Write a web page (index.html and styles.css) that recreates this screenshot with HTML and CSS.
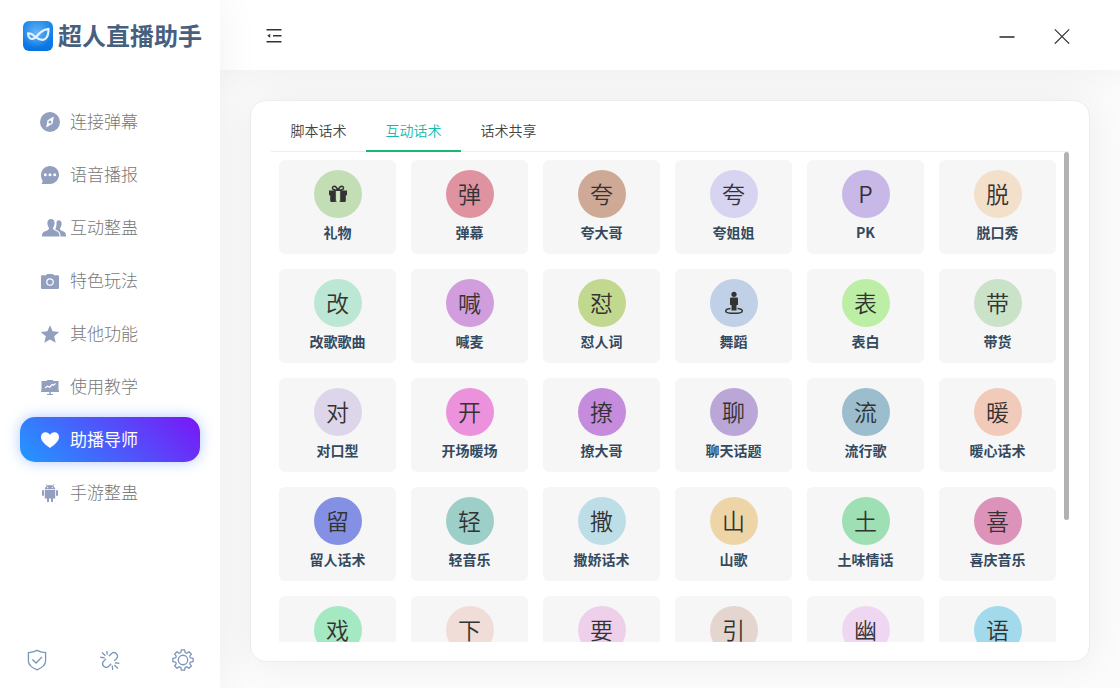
FILE: index.html
```html
<!DOCTYPE html>
<html lang="zh-CN">
<head>
<meta charset="utf-8">
<title>超人直播助手</title>
<link rel="stylesheet" href="styles.css">
</head>
<body>
<div class="app">
  <aside class="sidebar">
    <div class="brand">
      <svg class="brand-logo" viewBox="0 0 30 30" aria-hidden="true">
        <defs>
          <linearGradient id="logo-bg" x1="0" y1="0" x2="0" y2="1"><stop offset="0" stop-color="#1f8cec"/><stop offset="1" stop-color="#0673e2"/></linearGradient>
          <radialGradient id="logo-glow" cx=".45" cy=".4" r=".5"><stop offset="0" stop-color="#6bb5f6"/><stop offset="1" stop-color="#6bb5f6" stop-opacity="0"/></radialGradient>
        </defs>
        <rect width="30" height="30" rx="6" fill="url(#logo-bg)"/>
        <rect width="30" height="30" rx="6" fill="url(#logo-glow)"/>
        <path d="M5 12.300c.2 3.200 1.500 5.700 4 5.700 3.500 0 5.500-4 8.500-6.600 2.300-2 5-3.200 8-3.600.1 4.500-.8 8.200-3.300 10-3.700 2.500-7.200.2-10.200-2.300C9.800 13.600 7.500 12 5 12.300z" fill="none" stroke="#e4f1fe" stroke-width="2.200" stroke-linejoin="round"/>
      </svg>
      <span class="brand-name">超人直播助手</span>
    </div>
    <nav class="menu">
      <a class="menu-item" href="#">
        <svg class="menu-icon" viewBox="0 0 20 20" aria-hidden="true"><path fill-rule="evenodd" d="M10 0a10 10 0 1 1 0 20 10 10 0 0 1 0-20zm3.800 4.500L7.500 8.200 6.200 15.500l6.300-3.700zM10 8.500a1.500 1.500 0 1 1 0 3 1.500 1.500 0 0 1 0-3z"/></svg>
        <span>连接弹幕</span>
      </a>
      <a class="menu-item" href="#">
        <svg class="menu-icon" viewBox="0 0 20 20" aria-hidden="true"><path fill-rule="evenodd" d="M10 1c5 0 9 3.900 9 8.700s-4 9.300-9 9.300H1.500l1.300-2.800C1.600 14.500 1 12.200 1 10 1 5 5 1 10 1zM5.300 8.300a1.500 1.500 0 1 0 0 3 1.500 1.500 0 0 0 0-3zm4.700 0a1.500 1.500 0 1 0 0 3 1.500 1.500 0 0 0 0-3zm4.700 0a1.500 1.500 0 1 0 0 3 1.500 1.500 0 0 0 0-3z"/></svg>
        <span>语音播报</span>
      </a>
      <a class="menu-item" href="#">
        <svg class="menu-icon wide" viewBox="0 0 26 20" aria-hidden="true"><path d="M11 1c2.500 0 3.800 1.800 3.600 4.500-.1 2-1 3.500-1.600 4.300 0 1.700.5 2.100 2.500 2.900 3 1.100 4 2 4 5.800H2c0-3.800 1-4.700 4.500-5.800 2-.7 2.500-1.200 2.500-2.900C8.300 9 7.500 7.500 7.400 5.500 7.200 2.800 8.500 1 11 1z"/><path d="M18.500 2.300c2.200 0 3.300 1.600 3.100 4-.1 1.700-.9 3.200-1.600 4 0 1.600.6 2 2.400 2.700 2.800 1 3.600 2 3.600 5.500h-5.500c0-3.500-1-5.300-4-6.400-1-.4-1.200-.8-1-1.700.8-1.300 1.100-3.200 1-5.200-.1-1 .5-2.900 2-2.900z"/></svg>
        <span>互动整蛊</span>
      </a>
      <a class="menu-item" href="#">
        <svg class="menu-icon" viewBox="0 0 20 20" aria-hidden="true"><path fill-rule="evenodd" d="M2.200 4.200H6L7 3h6l1 1.200h3.800A1.200 1.200 0 0 1 19 5.400v11.400a1.200 1.200 0 0 1-1.200 1.200H2.200A1.200 1.200 0 0 1 1 16.800V5.400a1.200 1.200 0 0 1 1.200-1.200zM10 7.200a3.800 3.800 0 1 0 0 7.600 3.800 3.800 0 0 0 0-7.600zm0 1.200a2.600 2.600 0 1 1 0 5.200 2.600 2.600 0 0 1 0-5.200z"/></svg>
        <span>特色玩法</span>
      </a>
      <a class="menu-item" href="#">
        <svg class="menu-icon" viewBox="0 0 20 20" aria-hidden="true"><path d="M10 1.200l2.600 6.100 6.600.6-5 4.400 1.500 6.500-5.700-3.400-5.700 3.400 1.500-6.500-5-4.400 6.600-.6z"/></svg>
        <span>其他功能</span>
      </a>
      <a class="menu-item" href="#">
        <svg class="menu-icon" viewBox="0 0 20 20" aria-hidden="true"><path d="M1.500 4H7V3h6v1h5.500v11h-17z"/><path d="M9.200 15h1.600v2H13v1H7v-1h2.200z"/><path d="M1 13.500h18V15H1z"/><path d="M5 11l2.600-1.800 2.200 1 2.200-2.700 1.300.8L15.500 6.500" fill="none" stroke="#fff" stroke-width="1.200"/></svg>
        <span>使用教学</span>
      </a>
      <a class="menu-item active" href="#" aria-current="page">
        <svg class="menu-icon" viewBox="0 0 20 20" aria-hidden="true"><path d="M10 18C6 15 1 11.500 1 7c0-2.700 2-4.700 4.600-4.700 2 0 3.500 1 4.400 2.700.9-1.700 2.400-2.700 4.400-2.700C17 2.300 19 4.300 19 7c0 4.500-5 8-9 11z"/></svg>
        <span>助播导师</span>
      </a>
      <a class="menu-item" href="#">
        <svg class="menu-icon" viewBox="0 0 20 20" aria-hidden="true"><path fill-rule="evenodd" d="M6 1l1.500 1.600a6 6 0 0 1 5 0L14 1l.4.300L13.200 3c1.200.8 2 1.900 2 3.300H4.800c0-1.400.8-2.500 2-3.300L5.600 1.300zM7.700 4a.6.6 0 1 0 0 1.200.6.600 0 0 0 0-1.200zm4.600 0a.6.600 0 1 0 0 1.200.6.600 0 0 0 0-1.200z"/><path d="M4.800 7h10.400v8.500H13v2.700a1 1 0 0 1-2 0v-2.700H9v2.700a1 1 0 0 1-2 0v-2.700H4.800z"/><rect x="2" y="7" width="2" height="6" rx="1"/><rect x="16" y="7" width="2" height="6" rx="1"/></svg>
        <span>手游整蛊</span>
      </a>
    </nav>
    <div class="tools">
      <button class="tool" type="button" aria-label="安全">
        <svg viewBox="0 0 20 20" aria-hidden="true"><path d="M10 1.200c2.300 1.400 4.800 1.900 7.800 2.100V11c0 4-3.300 6.200-7.800 7.900C5.500 17.200 2.200 15 2.200 11V3.300C5.200 3.100 7.700 2.600 10 1.200z"/><path d="M5.800 9.500l3.300 3.200 5.400-5.500"/></svg>
      </button>
      <button class="tool" type="button" aria-label="断开连接">
        <svg viewBox="0 0 20 20" aria-hidden="true"><path d="M9 6.500l2-2c1.500-1.500 3.500-1.500 4.800-.2s1.300 3.300-.2 4.800l-1.800 1.700M6.300 9L4.500 10.800c-1.500 1.500-1.500 3.500-.2 4.800s3.300 1.300 4.800-.2l2-2M7 2l.6 3M2.800 3.200l3 3M1.200 7.500l4 .5M14.500 12.500l4 .5M14 14.500l3.200 3.200M12 15l.5 4"/></svg>
      </button>
      <button class="tool" type="button" aria-label="设置">
        <svg viewBox="-10 -10 20 20" aria-hidden="true"><path stroke-linejoin="round" d="M-1.500-9.200H1.500L1.900-6.900Q2.530-6.100 3.540-6.220L5.440-7.570L7.570-5.440L6.220-3.540Q6.100-2.530 6.900-1.900L9.200-1.500V1.500L6.900 1.900Q6.100 2.530 6.220 3.540L7.570 5.440L5.440 7.570L3.540 6.220Q2.530 6.100 1.900 6.900L1.500 9.200H-1.500L-1.900 6.900Q-2.530 6.100-3.540 6.220L-5.440 7.570L-7.570 5.440L-6.220 3.540Q-6.100 2.530-6.900 1.900L-9.200 1.500V-1.500L-6.900-1.900Q-6.100-2.530-6.220-3.540L-7.570-5.440L-5.440-7.570L-3.540-6.220Q-2.530-6.100-1.900-6.900Z"/><circle r="4.300"/></svg>
      </button>
    </div>
  </aside>

  <div class="main">
    <header class="topbar">
      <button class="bar-button" type="button" aria-label="收起菜单">
        <svg viewBox="0 0 16 16" aria-hidden="true"><path d="M.5 1.800h15M7 7.800h8.500M.5 13.800h15"/><path class="solid" d="M1.200 7.800l3-2v4z"/></svg>
      </button>
      <div class="window-buttons">
        <button class="bar-button" type="button" aria-label="最小化">
          <svg viewBox="0 0 16 16" aria-hidden="true"><path d="M.5 9h15"/></svg>
        </button>
        <button class="bar-button" type="button" aria-label="关闭">
          <svg class="thin" viewBox="0 0 16 16" aria-hidden="true"><path d="M.8 1.300l14.400 14.400M15.200 1.300L.8 15.700"/></svg>
        </button>
      </div>
    </header>

    <main class="content">
      <section class="panel">
        <div class="tabs" role="tablist">
          <button class="tab" type="button" role="tab" aria-selected="false">脚本话术</button>
          <button class="tab" type="button" role="tab" aria-selected="true">互动话术</button>
          <button class="tab" type="button" role="tab" aria-selected="false">话术共享</button>
        </div>
        <div class="viewport">
          <div class="grid">
            <button class="tile" type="button"><span class="disc c1"><svg viewBox="0 0 20 20" aria-hidden="true"><path d="M1 6.500h6.800v4.800H1zM12.200 6.500H19v4.800h-6.800zM2.200 11h5.600v7H3.500a1.300 1.300 0 0 1-1.300-1.300zM12.200 11h5.600v5.700a1.300 1.300 0 0 1-1.300 1.300h-4.300zM8.500 16.800h3V18h-3z"/><path d="M10 6.300C8.800 3.200 7.500 2 6 2.200 4.200 2.500 4 4.800 5.300 5.500c1 .6 3 .8 4.700.8s3.700-.2 4.700-.8c1.300-.7 1.100-3-.7-3.300-1.500-.2-2.800 1-4 4.100z" fill="none" stroke="#333" stroke-width="1.500"/><path d="M8.800 7h2.400v11H8.800z" fill="#d6e8ca"/></svg></span><span class="label">礼物</span></button>
            <button class="tile" type="button"><span class="disc c2">弹</span><span class="label">弹幕</span></button>
            <button class="tile" type="button"><span class="disc c3">夸</span><span class="label">夸大哥</span></button>
            <button class="tile" type="button"><span class="disc c4">夸</span><span class="label">夸姐姐</span></button>
            <button class="tile" type="button"><span class="disc c5">P</span><span class="label">PK</span></button>
            <button class="tile" type="button"><span class="disc c6">脱</span><span class="label">脱口秀</span></button>
            <button class="tile" type="button"><span class="disc c7">改</span><span class="label">改歌歌曲</span></button>
            <button class="tile" type="button"><span class="disc c8">喊</span><span class="label">喊麦</span></button>
            <button class="tile" type="button"><span class="disc c9">怼</span><span class="label">怼人词</span></button>
            <button class="tile" type="button"><span class="disc c10"><svg class="tall" viewBox="0 0 20 24" aria-hidden="true"><circle cx="10" cy="3.300" r="2.600"/><path d="M7.300 6.500h5.400A1.300 1.300 0 0 1 14 7.800V14h-1.500v5.500h-5V14H6V7.800a1.300 1.300 0 0 1 1.300-1.300z"/><path d="M6.500 17.600C3.500 18 1.700 18.800 1.700 19.900c0 1.400 3.500 2.400 8.300 2.400s8.300-1 8.300-2.400c0-1.100-1.800-1.900-4.800-2.300" fill="none" stroke="#333" stroke-width="1.500"/></svg></span><span class="label">舞蹈</span></button>
            <button class="tile" type="button"><span class="disc c11">表</span><span class="label">表白</span></button>
            <button class="tile" type="button"><span class="disc c12">带</span><span class="label">带货</span></button>
            <button class="tile" type="button"><span class="disc c13">对</span><span class="label">对口型</span></button>
            <button class="tile" type="button"><span class="disc c14">开</span><span class="label">开场暖场</span></button>
            <button class="tile" type="button"><span class="disc c15">撩</span><span class="label">撩大哥</span></button>
            <button class="tile" type="button"><span class="disc c16">聊</span><span class="label">聊天话题</span></button>
            <button class="tile" type="button"><span class="disc c17">流</span><span class="label">流行歌</span></button>
            <button class="tile" type="button"><span class="disc c18">暖</span><span class="label">暖心话术</span></button>
            <button class="tile" type="button"><span class="disc c19">留</span><span class="label">留人话术</span></button>
            <button class="tile" type="button"><span class="disc c20">轻</span><span class="label">轻音乐</span></button>
            <button class="tile" type="button"><span class="disc c21">撒</span><span class="label">撒娇话术</span></button>
            <button class="tile" type="button"><span class="disc c22">山</span><span class="label">山歌</span></button>
            <button class="tile" type="button"><span class="disc c23">土</span><span class="label">土味情话</span></button>
            <button class="tile" type="button"><span class="disc c24">喜</span><span class="label">喜庆音乐</span></button>
            <button class="tile" type="button"><span class="disc c25">戏</span></button>
            <button class="tile" type="button"><span class="disc c26">下</span></button>
            <button class="tile" type="button"><span class="disc c27">要</span></button>
            <button class="tile" type="button"><span class="disc c28">引</span></button>
            <button class="tile" type="button"><span class="disc c29">幽</span></button>
            <button class="tile" type="button"><span class="disc c30">语</span></button>
          </div>
          <div class="track"><div class="thumb"></div></div>
        </div>
      </section>
    </main>
  </div>
</div>
</body>
</html>
```
FILE: styles.css
```css
* { box-sizing: border-box; }

body {
  margin: 0;
  font-family: "Noto Sans CJK SC", "Noto Sans", sans-serif;
  font-size: 14px;
  color: #333;
  background: #fbfbfb;
}

button {
  padding: 0;
  border: 0;
  background: none;
  font: inherit;
  color: inherit;
  cursor: pointer;
}

.app {
  display: flex;
  height: 100vh;
  overflow: hidden;
}

/* Sidebar */
.sidebar {
  position: relative;
  z-index: 2;
  flex: 0 0 220px;
  display: flex;
  flex-direction: column;
  background: #fff;
  box-shadow: 0 0 40px rgba(0, 0, 0, .06);
}

.brand {
  display: flex;
  align-items: center;
  gap: 5px;
  height: 72px;
  padding-left: 23px;
}

.brand-logo { width: 30px; height: 30px; }

.brand-name {
  padding-bottom: 4px;
  font-size: 24px;
  font-weight: 700;
  color: #46607e;
}

.menu {
  display: flex;
  flex-direction: column;
  gap: 8px;
  padding: 27px 20px 0;
}

.menu-item {
  display: flex;
  align-items: center;
  gap: 10px;
  height: 45px;
  padding-left: 20px;
  border-radius: 15px;
  font-size: 17px;
  font-weight: 300;
  color: #777;
  text-decoration: none;
}

.menu-item span { padding-bottom: 2px; }

.menu-icon {
  width: 20px;
  height: 20px;
  fill: #929fbf;
}

.menu-icon.wide { width: 26px; margin-right: -6px; }

.menu-item.active {
  font-weight: 400;
  color: #fff;
  background: linear-gradient(45deg, #2199ff, #7a16f6);
  box-shadow: 0 0 14px rgba(60, 120, 255, .4);
}

.menu-item.active .menu-icon { fill: #fff; }

.tools {
  display: flex;
  justify-content: space-between;
  margin-top: auto;
  padding: 0 26px 17px;
}

.tool { height: 22px; }

.tool svg {
  display: block;
  width: 22px;
  height: 22px;
  fill: none;
  stroke: #7b96bb;
  stroke-width: 1.200;
}

/* Main column */
.main {
  flex: 1;
  min-width: 0;
  display: flex;
  flex-direction: column;
}

.topbar {
  position: relative;
  z-index: 1;
  flex: 0 0 70px;
  display: flex;
  align-items: center;
  justify-content: space-between;
  padding: 2px 50px 0 46px;
  background: #fff;
  box-shadow: 0 0 40px rgba(0, 0, 0, .06);
}

.window-buttons { display: flex; gap: 39px; }

.bar-button svg {
  display: block;
  width: 16px;
  height: 16px;
  fill: none;
  stroke: #333;
  stroke-width: 1.600;
}

.bar-button .thin { stroke-width: 1.200; }
.bar-button .solid { fill: #333; stroke: none; }

.content {
  flex: 1;
  min-height: 0;
  display: flex;
  padding: 30px 30px 26px;
}

.panel {
  flex: 1;
  min-width: 0;
  display: flex;
  flex-direction: column;
  padding: 10px 20px 19px;
  border: 1px solid #ededed;
  border-radius: 16px;
  background: #fff;
  box-shadow: 0 0 40px rgba(0, 0, 0, .06);
}

.tabs {
  display: flex;
  height: 41px;
  border-bottom: 1px solid #eee;
}

.tab {
  width: 95px;
  height: 41px;
  padding-bottom: 2px;
  border-bottom: 2px solid transparent;
  font-weight: 350;
  color: #444;
}

.tab[aria-selected="true"] {
  border-bottom-color: #16b777;
  color: #16baaa;
}

/* Tile list with its slim scroll track */
.viewport {
  flex: 1;
  min-height: 0;
  display: flex;
  overflow: hidden;
}

.grid {
  flex: 1;
  display: grid;
  grid-template-columns: repeat(6, 1fr);
  align-content: start;
  gap: 15px;
  padding: 8px;
}

.track { flex: 0 0 5px; }

.thumb {
  height: 75%;
  border-radius: 3px;
  background: #b2b2b2;
}

.tile {
  display: flex;
  flex-direction: column;
  align-items: center;
  height: 94px;
  padding-top: 10px;
  border-radius: 6px;
  background: #f6f6f6;
}

.disc {
  display: flex;
  justify-content: center;
  width: 48px;
  height: 48px;
  border-radius: 50%;
  font-size: 23px;
  font-weight: 350;
  line-height: 46px;
  color: #333;
}

.disc svg {
  align-self: center;
  width: 20px;
  height: 20px;
  fill: #333;
}

.disc .tall { height: 24px; }

.label {
  margin-top: 4px;
  font-weight: 700;
  line-height: 20px;
  color: #34495e;
}

.c1 { background: #c3deb5; }
.c2 { background: #df93a0; }
.c3 { background: #cea995; }
.c4 { background: #d6d4f1; }
.c5 { background: #c8b8e8; }
.c6 { background: #f2e0cb; }
.c7 { background: #bde7d5; }
.c8 { background: #d29ddc; }
.c9 { background: #c1d88e; }
.c10 { background: #c0d0e7; }
.c11 { background: #bdeea5; }
.c12 { background: #c9e2c8; }
.c13 { background: #ddd5e9; }
.c14 { background: #ec92dc; }
.c15 { background: #c58bdc; }
.c16 { background: #bba6d8; }
.c17 { background: #9bbdce; }
.c18 { background: #f2cab9; }
.c19 { background: #8490e4; }
.c20 { background: #9dcec8; }
.c21 { background: #bddde7; }
.c22 { background: #eed5a8; }
.c23 { background: #9edfb4; }
.c24 { background: #dd92b9; }
.c25 { background: #a5e9c3; }
.c26 { background: #f1ddd7; }
.c27 { background: #eed0ea; }
.c28 { background: #e4d5ce; }
.c29 { background: #f0d7f1; }
.c30 { background: #a2d9eb; }
```
